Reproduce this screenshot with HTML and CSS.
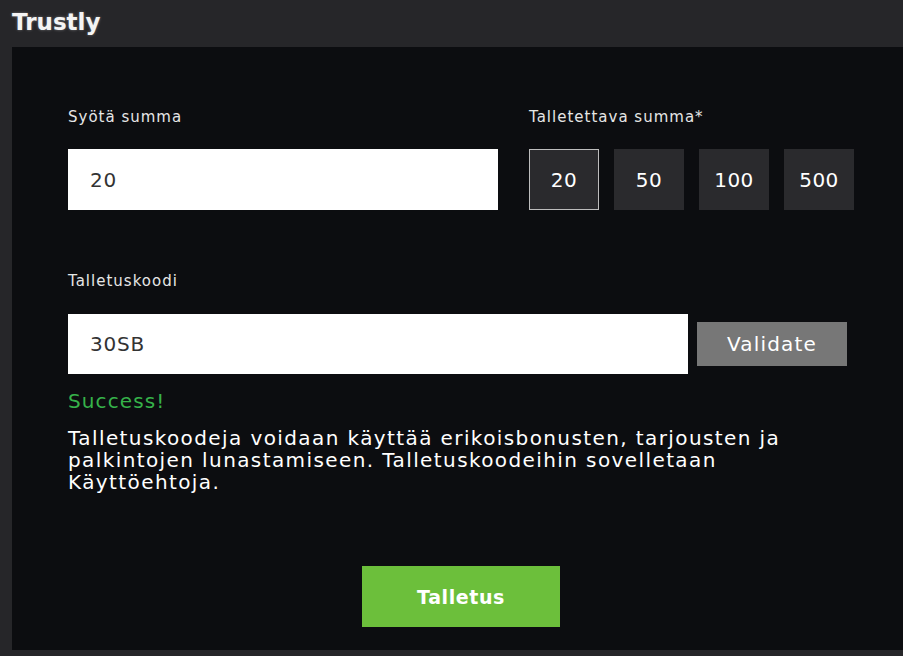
FILE: index.html
```html
<!DOCTYPE html>
<html lang="fi">
<head>
    <meta charset="UTF-8">
    <meta name="viewport" content="width=device-width, initial-scale=1.0">
    <title>Trustly</title>
    <link rel="stylesheet" href="styles.css">
</head>
<body>
    <header class="top-bar">Trustly</header>

    <main class="panel">
        <div class="amount-row">
            <div class="field amount-field">
                <label for="amount">Syötä summa</label>
                <input type="text" id="amount" value="20">
            </div>
            <div class="field">
                <span class="label">Talletettava summa*</span>
                <div class="presets">
                    <button class="preset active">20</button>
                    <button class="preset">50</button>
                    <button class="preset">100</button>
                    <button class="preset">500</button>
                </div>
            </div>
        </div>

        <div class="field code-field">
            <label for="code">Talletuskoodi</label>
            <div class="code-row">
                <input type="text" id="code" value="30SB">
                <button class="validate-btn">Validate</button>
            </div>
        </div>

        <p class="success">Success!</p>
        <p class="info">Talletuskoodeja voidaan käyttää erikoisbonusten, tarjousten ja<br>palkintojen lunastamiseen. Talletuskoodeihin sovelletaan<br>Käyttöehtoja.</p>

        <div class="actions">
            <button class="deposit-btn">Talletus</button>
        </div>
    </main>
</body>
</html>
```

FILE: styles.css
```css
:root {
    --frame-bg: #262629;
    --panel-bg: #0c0d10;
    --tile-bg: #2a2a2d;
    --text-primary: #f2f2f2;
    --green: #6cbf3b;
    --success: #36b24a;
}

body {
    margin: 0;
    background: var(--frame-bg);
    font-family: "DejaVu Sans", Verdana, sans-serif;
    color: var(--text-primary);
    height: 656px;
    overflow: hidden;
}

.top-bar {
    height: 47px;
    line-height: 44px;
    padding-left: 12px;
    font-size: 23px;
    font-weight: bold;
    color: #f4f4f4;
    text-shadow: 0 0 3px rgba(255, 255, 255, 0.35);
}

.panel {
    margin-left: 12px;
    height: 603px;
    box-sizing: border-box;
    background: var(--panel-bg);
    padding: 61px 0 0 56px;
    width: calc(100% - 12px);
}

.panel > * {
    width: 786px;
}

.amount-row {
    display: flex;
    gap: 31px;
}

.amount-field {
    width: 430px;
}

label, .label {
    display: block;
    font-size: 15px;
    line-height: 18px;
    letter-spacing: 1px;
    color: #e6e6e6;
    margin-bottom: 23px;
}

input {
    display: block;
    box-sizing: border-box;
    width: 100%;
    height: 61px;
    border: none;
    padding: 0 22px;
    background: #fff;
    font-family: inherit;
    font-size: 20px;
    letter-spacing: 0.8px;
    color: #333;
    outline: none;
}

.presets {
    display: flex;
    gap: 15px;
}

.preset {
    width: 70px;
    height: 61px;
    border: 1px solid transparent;
    background: var(--tile-bg);
    color: #fff;
    font-family: inherit;
    font-size: 20px;
    letter-spacing: 0.5px;
    padding: 0;
}

.preset.active {
    border-color: #bdbdbd;
}

.code-field {
    margin-top: 62px;
}

.code-field label {
    margin-bottom: 24px;
}

.code-row {
    display: flex;
    align-items: center;
    gap: 9px;
}

.code-row input {
    width: 620px;
    height: 60px;
}

.validate-btn {
    width: 150px;
    height: 44px;
    border: none;
    background: #777777;
    color: #fff;
    font-family: inherit;
    font-size: 20px;
    letter-spacing: 1.2px;
    padding: 0;
}

.success {
    margin: 15px 0 0;
    font-size: 20px;
    line-height: 24px;
    letter-spacing: 1.1px;
    color: var(--success);
}

.info {
    margin: 14px 0 0;
    font-size: 20px;
    line-height: 22px;
    letter-spacing: 1.4px;
    color: #fff;
}

.actions {
    display: flex;
    justify-content: center;
    margin-top: 73px;
}

.deposit-btn {
    width: 198px;
    height: 61px;
    border: none;
    background: var(--green);
    color: #fff;
    font-family: inherit;
    font-size: 19px;
    font-weight: bold;
    letter-spacing: 0.6px;
    padding: 0;
}
```
